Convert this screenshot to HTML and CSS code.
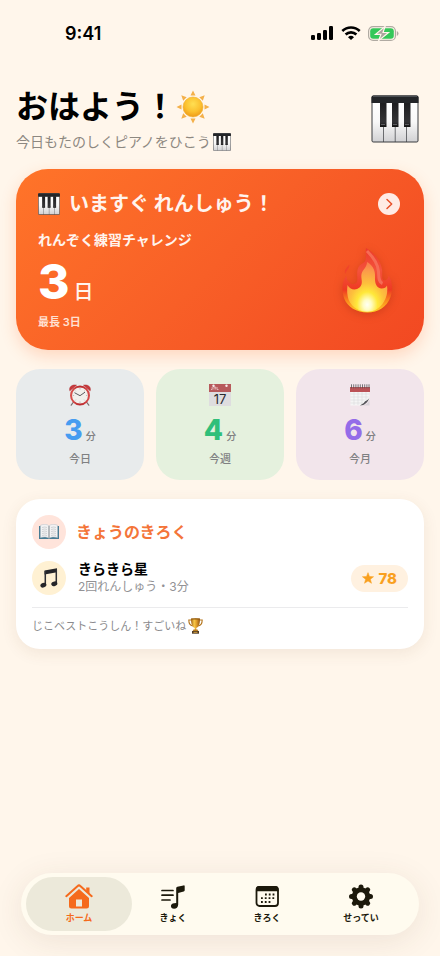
FILE: index.html
```html
<!DOCTYPE html>
<html lang="ja">
<head>
<meta charset="utf-8">
<meta name="viewport" content="width=device-width, initial-scale=1">
<title>ピアノれんしゅう</title>
<link rel="stylesheet" href="styles.css">
</head>
<body>
<svg class="defs" aria-hidden="true">
  <defs>
    <linearGradient id="keyWhite" x1="0" y1="0" x2="0" y2="1"><stop offset="0" stop-color="#fff"/><stop offset=".5" stop-color="#f8f8f8"/><stop offset="1" stop-color="#d2d2d4"/></linearGradient>
    <linearGradient id="keyBlack" x1="0" y1="0" x2="0" y2="1"><stop offset="0" stop-color="#1c1c1e"/><stop offset=".8" stop-color="#333336"/><stop offset="1" stop-color="#111"/></linearGradient>
    <symbol id="piano" viewBox="0 0 48 48">
      <rect x=".5" y=".5" width="47" height="47" rx="2" fill="#3a3c40"/>
      <path d="M1.500 7h10.800v39.500H1.500zM13 7h10.800v39.500H13zM24.500 7h10.800v39.500H24.500zM36 7h10.500v39.500H36z" fill="url(#keyWhite)"/>
      <path d="M9 7h6.500v25H9zM21 7h6.500v25H21zM33 7h6.500v25H33z" fill="url(#keyBlack)"/>
      <path d="M10 29.500h4M22 29.500h4M34 29.500h4" stroke="#5c5c60"/>
      <path d="M2.500.5h43a2 2 0 0 1 2 2V8H.5V2.500a2 2 0 0 1 2-2z" fill="#232528"/>
      <path d="M2 1.500h44" stroke="#4b4f53"/>
    </symbol>
    <radialGradient id="sunFill" cx=".5" cy=".35" r=".65"><stop offset="0" stop-color="#ffdf52"/><stop offset=".6" stop-color="#fbc02f"/><stop offset="1" stop-color="#ee9a18"/></radialGradient>
    <radialGradient id="flameIn" cx=".5" cy=".86" r=".86"><stop offset="0" stop-color="#fffff4"/><stop offset=".12" stop-color="#fffcc4"/><stop offset=".3" stop-color="#ffe83a"/><stop offset=".5" stop-color="#fdc03c"/><stop offset=".8" stop-color="#fb9a4a"/><stop offset="1" stop-color="#f97a4c"/></radialGradient>
    <linearGradient id="flameOut" x1="0" y1="0" x2="0" y2="1"><stop offset="0" stop-color="#ec3a2a"/><stop offset=".35" stop-color="#f4523c"/><stop offset=".65" stop-color="#ee3a22"/><stop offset=".82" stop-color="#fb8a1c"/><stop offset="1" stop-color="#ffd42a"/></linearGradient>
    <linearGradient id="gold" x1="0" x2="1"><stop offset="0" stop-color="#9c5b10"/><stop offset=".35" stop-color="#f8ca4a"/><stop offset=".6" stop-color="#e2a02a"/><stop offset="1" stop-color="#8e5110"/></linearGradient>
    <linearGradient id="red" x1="0" x2="1"><stop offset="0" stop-color="#d9504c"/><stop offset=".5" stop-color="#b8282c"/><stop offset="1" stop-color="#d6494a"/></linearGradient>
  </defs>
</svg>

<div class="screen">
  <div class="status">
    <span class="time">9:41</span>
    <span class="signals">
      <svg width="23" height="14" viewBox="0 0 23 14" aria-hidden="true"><rect x="0" y="9" width="4" height="5" rx="1.200"/><rect x="6" y="7" width="4" height="7" rx="1.200"/><rect x="12" y="4" width="4" height="10" rx="1.200"/><rect x="18" y="0" width="4" height="14" rx="1.200"/></svg>
      <svg width="20" height="14" viewBox="0 0 20 14" fill="none" stroke="#000" stroke-width="2.600" aria-hidden="true"><path d="M1.300 5A12.600 12.600 0 0 1 18.700 5"/><path d="M4.600 8.500a7.800 7.800 0 0 1 10.800 0"/><path d="M7 11.300a4.300 4.300 0 0 1 6 0L10 14z" fill="#000" stroke="none"/></svg>
      <svg width="31" height="15" viewBox="0 0 31 15" aria-hidden="true"><rect x=".6" y=".6" width="26.800" height="13.800" rx="4.500" fill="none" stroke="#b0aaa2" stroke-width="1.200"/><path d="M28.800 5v5q1.700-.7 1.700-2.500T28.800 5z" fill="#b0aaa2"/><rect x="2.200" y="2.200" width="23.600" height="10.600" rx="3" fill="#34c759"/><path d="M17.200.3 7.500 8.400h5.400L10.600 14.600 20.500 6.500H15z" fill="#aaa59e" stroke="#fff6eb" stroke-width="1.200"/></svg>
    </span>
  </div>

  <main class="content">
    <header class="greeting">
      <div>
        <h1>おはよう！<svg class="sun" viewBox="0 0 34 34" aria-hidden="true"><path d="m17 .5 2.500 5h-5zM17 33.500l2.500-5h-5zM.5 17l5-2.500v5zM33.500 17l-5-2.500v5zM5.300 5.300l5.400 1.900-3.500 3.500zM28.700 5.300l-5.400 1.900 3.500 3.500zM5.300 28.700l5.400-1.900-3.500-3.500zM28.700 28.700l-5.400-1.900 3.500-3.500z" fill="#f4b04a"/><circle cx="17" cy="17" r="10" fill="url(#sunFill)" stroke="#f0ac2c" stroke-width=".6"/></svg></h1>
        <p class="lead">今日もたのしくピアノをひこう<svg class="lead-icon" aria-hidden="true"><use href="#piano"/></svg></p>
      </div>
      <svg class="mascot" aria-hidden="true"><use href="#piano"/></svg>
    </header>

    <a class="hero" href="#practice">
      <span class="hero-head">
        <svg class="hero-piano" aria-hidden="true"><use href="#piano"/></svg>
        <span class="hero-title">いますぐ れんしゅう！</span>
        <svg class="chevron" viewBox="0 0 22 22" aria-hidden="true"><circle cx="11" cy="11" r="11" fill="#ffebe5"/><path d="m9 6.500 4.700 4.500L9 15.500" fill="none" stroke="#e8502a" stroke-width="1.500" stroke-linecap="round" stroke-linejoin="round"/></svg>
      </span>
      <span class="hero-body">
        <span class="streak">
          <span class="streak-label">れんぞく練習チャレンジ</span>
          <span class="streak-count"><b>3</b><span>日</span></span>
          <span class="streak-best">最長 3日</span>
        </span>
        <svg class="flame" viewBox="0 0 51 65" aria-hidden="true">
          <path d="M24 0C32 5 38.500 12 40 21c.8 5-.7 9 1.200 11 2.200 1.500 5-.8 5.500-4.500C50 33 51.500 41 48.500 49 45 59 36 64.500 25.500 64.500S5 59 2 50C-.5 42-.2 33 4.500 28c0 5 4 9 8 8 5-1.300 1.500-8 3-14C17 15 22 16.500 23.500 12c1-4-.2-8 .5-12z" fill="url(#flameOut)"/>
          <path d="M25 3c6 6 11 13 11.500 20.500.3 6 0 10.500 4 12" fill="none" stroke="#f66c56" stroke-width="3"/>
          <path d="M25 14c5 2.500 8.500 8 8 15-.4 6 1.500 11 6 11.500 3 .3 5-1 6-3C46.500 46 43 56 35 61c-5 3.500-15 3.500-20 0C7 57 4 48 5.500 37c2 4.500 8 6 12 2.500 4.500-4 1-9 2-13.500 1-4.500 5.500-6.500 5.500-12z" fill="url(#flameIn)"/>
          <path d="M7.500 16.500c-4.500 4.500-5.500 6.500-4 9.500C4 22 7.500 21 7.500 16.500z" fill="#f0442a"/>
        </svg>
      </span>
    </a>

    <section class="stats" aria-label="れんしゅう時間">
      <div class="stat stat-day">
        <svg class="stat-icon" viewBox="0 0 22 22" aria-hidden="true"><path d="m4.500 18-2.300 3.200M17.500 18l2.300 3.200" stroke="#7a6f70" stroke-width="1.200" stroke-linecap="round"/><path d="M.8 6.800C-.3 3 3 .2 7.500 1.200zM21.200 6.800C22.300 3 19 .2 14.500 1.200z" fill="#c9383b" stroke="#a82a2e" stroke-width=".5"/><circle cx="11" cy="11.500" r="9" fill="#f2efec" stroke="url(#red)" stroke-width="2"/><path d="M11 4v1.500M11 17.500V19M3.700 11.500h1.400M17 11.500h1.400M6 6.500l.8.8M16 6.500l-.8.8M6 16.500l.8-.8M16 16.500l-.8-.8" stroke="#a8a4a4" stroke-width=".7"/><path d="m5.500 8.700 5.500 3 5-3.500" fill="none" stroke="#4b4a4e" stroke-width=".9"/></svg>
        <p class="stat-value"><b>3</b><span>分</span></p><p class="stat-label">今日</p>
      </div>
      <div class="stat stat-week">
        <svg class="stat-icon" viewBox="0 0 22 22" aria-hidden="true"><path d="M0 0h22v22H0z" fill="#dedddf"/><path d="M0 0h22v8H0z" fill="#b75a5b"/><path d="M3.200 3v2.500H2M5 5.500V3h1.700v2.500M8 3v2.500h1.500" fill="none" stroke="#ebcaca" stroke-width=".8"/><circle cx="4.500" cy="1.700" r="1.200" fill="#f6eeee"/><circle cx="17.500" cy="1.700" r="1.200" fill="#f6eeee"/><text x="11" y="19.500" text-anchor="middle" class="cal-num">17</text></svg>
        <p class="stat-value"><b>4</b><span>分</span></p><p class="stat-label">今週</p>
      </div>
      <div class="stat stat-month">
        <svg class="stat-icon" viewBox="0 0 22 22" aria-hidden="true"><path d="M1.500 2.500h19v13l-7.500 6H1.500z" fill="#f5f5f5"/><path d="M1.500 10h19M1.500 13h18M1.500 16h14M1.500 19h12M5 8v13M9 8v13M13 8v12M17 8v8" stroke="#dadadc" stroke-width=".6"/><path d="M1 3h20v5H1z" fill="#bb5256"/><path d="M2.500.3v4M4.700.3v4M6.900.3v4M9.100.3v4M11.300.3v4M13.500.3v4M15.700.3v4M17.900.3v4M20 .3v4" stroke="#555357" stroke-width=".8"/><path d="M20.500 13.500c-1 3-4 3-5 4.500-.8 1.300-2.500 2-4.500 3.500 4 .3 8-3 9.500-8z" fill="#55555a"/><path d="M20.500 16v5.500H14c3-.8 5.500-3 6.500-5.500z" fill="#d9d4da"/></svg>
        <p class="stat-value"><b>6</b><span>分</span></p><p class="stat-label">今月</p>
      </div>
    </section>

    <section class="log">
      <header class="log-head">
        <span class="disc disc-book"><svg width="20" height="16" viewBox="0 0 20 16" aria-hidden="true"><path d="M0 2h20v13H0z" fill="#477c94"/><path d="M1.500 13.500V1.200C4.500-.1 8 0 10 1.800 12 0 15.500-.1 18.500 1.200v12.300c-3-1-6.500-.8-8.500.8-2-1.600-5.500-1.800-8.500-.8z" fill="#f2f2f3" stroke="#bbbfc4" stroke-width=".5"/><path d="M10 2v12" stroke="#7f8489"/><path d="M3 3.500q3-1 5 0M3 5.500q3-1 5 0M3 7.500q3-1 5 0M3 9.500q3-1 5 0M3 11.500q3-1 5 0M12 3.500q3-1 5 0M12 5.500q3-1 5 0M12 7.500q3-1 5 0M12 9.500q3-1 5 0M12 11.500q3-1 5 0" fill="none" stroke="#b9bcc0" stroke-width=".6"/></svg></span>
        <h2>きょうのきろく</h2>
      </header>
      <div class="song">
        <span class="disc disc-note"><svg width="18" height="20" viewBox="0 0 18 20" aria-hidden="true"><path d="M4.500 2.500 17 .3v4L4.500 6.500z" fill="#252528"/><path d="M5.300 3v13.500M16.300 1.500v13.800" stroke="#303034" stroke-width="1.500"/><ellipse cx="3.400" cy="17.200" rx="3.100" ry="2.300" transform="rotate(-20 3.400 17.200)" fill="#252528"/><ellipse cx="14.300" cy="15.800" rx="3.100" ry="2.300" transform="rotate(-20 14.300 15.800)" fill="#252528"/></svg></span>
        <div class="song-text"><h3>きらきら星</h3><p>2回れんしゅう・3分</p></div>
        <span class="score"><svg width="12" height="12" viewBox="0 0 24 23" aria-hidden="true"><path d="m12 .8 3 7.700 8.200.4-6.400 5.200 2.200 8-7-4.500-7 4.500 2.200-8L.8 8.900 9 8.500z" fill="#f9a01f" stroke="#f9a01f" stroke-linejoin="round"/></svg>78</span>
      </div>
      <p class="praise">じこベストこうしん！すごいね<svg width="15" height="16" viewBox="0 0 15 16" aria-hidden="true"><path d="M3.500 2H.8c0 3.500 1.500 5.500 4 6M11.500 2h2.700c0 3.500-1.500 5.500-4 6" fill="none" stroke="#b4751c" stroke-width="1.100"/><path d="M3 .5h9c0 5-1 8.500-3.700 9.500v2H6.700v-2C4 9 3 5.500 3 .5z" fill="url(#gold)"/><ellipse cx="7.500" cy=".9" rx="4.500" ry=".7" fill="#8d5610"/><path d="M5.500 11.500h4l.8 1.500H4.700z" fill="#b87a1e"/><path d="M4 13h7v2.700H4z" fill="#4f3a25"/><path d="M5.500 13.800h4v1h-4z" fill="#d8a33a"/></svg></p>
    </section>
  </main>

  <nav class="tabs" aria-label="メニュー">
    <a class="tab active" href="#home" aria-current="page"><svg width="28" height="25" viewBox="0 0 28 25" aria-hidden="true"><path d="M1.300 12.200 12.700 2a1.900 1.900 0 0 1 2.600 0l11.400 10.200" fill="none" stroke="#f56a1c" stroke-width="2" stroke-linecap="round"/><path d="M21.200 3.500h3.300V10l-3.300-3z" fill="#f56a1c"/><path fill-rule="evenodd" d="M14 5 24 13.900v8.100a2.500 2.500 0 0 1-2.500 2.500h-15A2.500 2.500 0 0 1 4 22v-8.100zM11 15.500v7h6v-7z" fill="#f56a1c"/></svg><span>ホーム</span></a>
    <a class="tab" href="#songs"><svg width="28" height="25" viewBox="0 0 28 25" aria-hidden="true"><path d="M3 6.500h11M3 11.200h11M3 16h8" stroke="#1c190b" stroke-width="1.700" stroke-linecap="round"/><path d="M17.200 19V4.200q0-1.200 1.200-1.500l6.100-1.300q1.200-.3 1.200.9v4q0 1-1 1.300L19.200 9v11.500c0 2.800-1.900 4.200-4.100 4.200-4.200 0-4.200-5.200 0-5.500z" fill="#1c190b"/></svg><span>きょく</span></a>
    <a class="tab" href="#records"><svg width="28" height="25" viewBox="0 0 28 25" aria-hidden="true"><rect x="3.500" y="3" width="21.500" height="19" rx="3" fill="none" stroke="#1c190b" stroke-width="1.800"/><path d="M3 7.300V5.500A3.400 3.400 0 0 1 6.400 2.100h15.700a3.400 3.400 0 0 1 3.400 3.400v1.800z" fill="#1c190b"/><path d="M12 10.500h9.500M8 14.200h13.500M8 18h9.500" stroke="#1c190b" stroke-width="1.800" stroke-dasharray="1.800 2"/></svg><span>きろく</span></a>
    <a class="tab" href="#settings"><svg width="28" height="25" viewBox="-14 -12.500 28 25" aria-hidden="true"><circle r="6.700" fill="none" stroke="#1c190b" stroke-width="5"/><g stroke="#1c190b" stroke-width="5" stroke-linecap="round"><path d="M0-9.500v19M-9.500 0h19"/><path d="m-6.700-6.700 13.400 13.400M6.700-6.700-6.700 6.700"/></g><circle r="4.200" fill="#fffbef"/></svg><span>せってい</span></a>
  </nav>
</div>
</body>
</html>
```

FILE: styles.css
```css
* { box-sizing: border-box; }

body {
  margin: 0;
  background: #fff6eb;
  color: #000;
  font-family: Inter, "Noto Sans CJK JP", sans-serif;
}

h1, h2, h3, p { margin: 0; }
a { color: inherit; text-decoration: none; }
svg { flex: none; }
.defs { position: absolute; width: 0; height: 0; }

.screen {
  display: flex;
  flex-direction: column;
  min-height: 100vh;
  padding-bottom: 21px;
}

/* Status bar */
.status {
  display: flex;
  align-items: center;
  justify-content: space-between;
  height: 66px;
  padding: 0 41px 0 65px;
}
.time { font-size: 18px; font-weight: 600; }
.signals { display: flex; align-items: center; gap: 7px; }

.content { padding: 20px 16px; }

/* Greeting */
.greeting {
  display: flex;
  align-items: center;
  justify-content: space-between;
  margin-bottom: 17px;
}
.greeting h1 {
  display: flex;
  align-items: center;
  font-size: 32px;
  line-height: 42px;
  font-weight: 700;
}
.sun { width: 34px; height: 34px; }
.lead {
  display: flex;
  align-items: center;
  gap: 2px;
  margin-top: 4px;
  font-size: 14px;
  line-height: 20px;
  color: #8d8881;
}
.lead-icon { width: 18px; height: 18px; }
.mascot { width: 48px; height: 48px; margin-right: 5px; }

/* Practice card */
.hero {
  display: block;
  padding: 23px 24px 20px 22px;
  border-radius: 32px;
  background: linear-gradient(135deg, #ff7429 0%, #f85f27 50%, #f24822 100%);
  box-shadow: 0 6px 16px rgba(255, 107, 36, 0.22);
  color: #fff4ee;
}
.hero-head { display: flex; align-items: center; gap: 9px; height: 24px; }
.hero-piano { width: 22px; height: 22px; }
.hero-title { flex: 1; font-size: 20px; line-height: 24px; font-weight: 700; }
.chevron { width: 22px; height: 22px; }
.hero-body {
  display: flex;
  align-items: center;
  justify-content: space-between;
  margin-top: 14px;
}
.streak { display: flex; flex-direction: column; gap: 8px; }
.streak-label { font-size: 14px; line-height: 20px; font-weight: 700; }
.streak-count { display: flex; align-items: baseline; gap: 4px; height: 48px; line-height: 48px; }
.streak-count b { font-size: 48px; font-weight: 800; color: #fff; }
.streak-count span { font-size: 20px; font-weight: 500; }
.streak-best { font-size: 11px; line-height: 16px; font-weight: 600; color: #ffe0d2; }
.flame {
  width: 51px;
  height: 65px;
  margin-right: 7px;
  filter: drop-shadow(0 2px 4px rgba(120, 20, 0, 0.25));
}

/* Minutes per period */
.stats {
  display: grid;
  grid-template-columns: repeat(3, 1fr);
  gap: 12px;
  margin-top: 19px;
}
.stat {
  display: flex;
  flex-direction: column;
  align-items: center;
  padding: 15px 8px 13px;
  border-radius: 24px;
}
.stat-day { background: #e8ebec; }
.stat-week { background: #e5f1de; }
.stat-month { background: #f2e5eb; }
.stat-icon { width: 22px; height: 22px; }
.cal-num { font-size: 13px; fill: #2b2b2e; }
.stat-value {
  display: flex;
  align-items: baseline;
  gap: 3px;
  height: 28px;
  margin-top: 10px;
  line-height: 28px;
  color: #7f8082;
}
.stat-value b { font-size: 28px; font-weight: 800; }
.stat-value span { font-size: 10px; font-weight: 500; }
.stat-day b { color: #469cf0; }
.stat-week b { color: #30bf7a; }
.stat-month b { color: #946ce8; }
.stat-label { margin-top: 7px; font-size: 11px; line-height: 16px; font-weight: 500; color: #7f8082; }

/* Today's record */
.log {
  margin-top: 19px;
  padding: 16px 16px 15px;
  border-radius: 24px;
  background: #fff;
  box-shadow: 0 4px 16px rgba(110, 70, 30, 0.09);
}
.log-head { display: flex; align-items: center; gap: 10px; }
.log-head h2 { font-size: 16px; line-height: 24px; font-weight: 700; color: #f47539; }
.disc {
  display: grid;
  place-items: center;
  width: 34px;
  height: 34px;
  border-radius: 50%;
}
.disc-book { background: #ffe4db; }
.disc-note { background: #fff1d3; }
.song { display: flex; align-items: center; gap: 12px; margin-top: 12px; }
.song-text { flex: 1; margin: -1px 0; }
.song-text h3 { font-size: 14px; line-height: 18px; font-weight: 700; }
.song-text p { font-size: 12px; line-height: 18px; color: #929295; }
.score {
  display: flex;
  align-items: center;
  gap: 4px;
  height: 27px;
  padding: 0 11px;
  border-radius: 14px;
  background: #fff1e0;
  color: #f9a01f;
  font-size: 15px;
  font-weight: 800;
}
.praise {
  display: flex;
  align-items: center;
  gap: 2px;
  margin-top: 12px;
  padding-top: 10px;
  border-top: 1px solid #ebebed;
  font-size: 11px;
  line-height: 16px;
  color: #8a8a8d;
}

/* Tab bar */
.tabs {
  display: grid;
  grid-template-columns: repeat(4, 1fr);
  margin: auto 21px 0;
  padding: 4px 11px;
  border-radius: 31px;
  background: #fffbef;
  box-shadow: 0 6px 32px rgba(90, 60, 40, 0.1);
}
.tab {
  position: relative;
  display: flex;
  flex-direction: column;
  align-items: center;
  gap: 2px;
  height: 54px;
  padding-top: 7px;
  font-size: 9px;
  line-height: 14px;
  font-weight: 600;
  color: #1c190b;
}
.tab > * { position: relative; }
.active { color: #f56a1c; }
.active::before {
  content: "";
  position: absolute;
  inset: 0 -6px;
  border-radius: 27px;
  background: #ece9da;
}
```
